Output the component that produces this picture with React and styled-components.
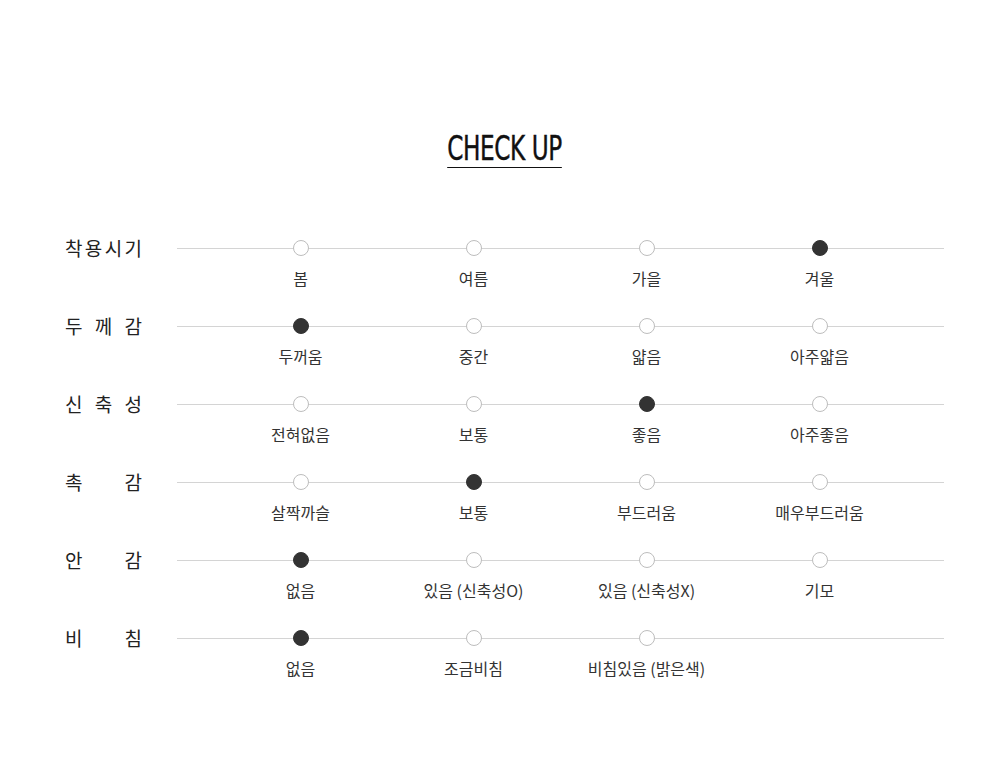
import React from "react";
import styled, { createGlobalStyle } from "styled-components";

const GlobalStyle = createGlobalStyle`
  html, body { margin: 0; padding: 0; background: #fff; }
  body { font-family: "Noto Sans CJK KR", "Noto Sans", sans-serif; color: #222; }
`;

const Page = styled.div`
  width: 1000px;
  height: 776px;
  box-sizing: border-box;
  padding: 131px 0 0 65px;
`;

const TitleWrap = styled.div`
  display: flex;
  justify-content: center;
  width: 879px;
  margin-bottom: 80px;
`;

const Title = styled.h2`
  margin: 0;
  font-family: "DejaVu Sans Condensed", "DejaVu Sans", sans-serif;
  font-stretch: condensed;
  font-weight: 400;
  font-size: 33px;
  line-height: 36px;
  color: #111;
  letter-spacing: -0.5px;
  border-bottom: 1px solid #111;
  padding-bottom: 0px;
  transform: scaleX(0.78);
  -webkit-text-stroke: 0.4px #111;
`;

const Rows = styled.div`
  display: flex;
  flex-direction: column;
  gap: 37px;
`;

const Row = styled.div`
  display: flex;
  align-items: flex-start;
`;

const RowLabel = styled.div`
  width: 77px;
  margin-right: 35px;
  display: flex;
  justify-content: space-between;
  font-size: 19px;
  line-height: 24px;
  color: #222;
  margin-top: -12px;
`;

const Track = styled.div`
  position: relative;
  width: 767px;
  padding-left: 37px;
  box-sizing: border-box;
  display: grid;
  grid-template-columns: repeat(4, 173px);
  &::before {
    content: "";
    position: absolute;
    left: 0;
    right: 0;
    top: 0;
    height: 1px;
    background: #d4d4d4;
  }
`;

const Option = styled.div`
  display: flex;
  flex-direction: column;
  align-items: center;
  position: relative;
  margin-top: -8px;
`;

const Dot = styled.span`
  box-sizing: border-box;
  width: 16px;
  height: 16px;
  border-radius: 50%;
  background: ${(p) => (p.$on ? "#333" : "#fff")};
  border: 1px solid ${(p) => (p.$on ? "#333" : "#bdbdbd")};
`;

const OptionText = styled.span`
  margin-top: 12px;
  font-size: 16px;
  line-height: 21px;
  color: #333;
  white-space: nowrap;
`;

const data = [
  { label: "착용시기", opts: ["봄", "여름", "가을", "겨울"], on: 3 },
  { label: "두께감", opts: ["두꺼움", "중간", "얇음", "아주얇음"], on: 0 },
  { label: "신축성", opts: ["전혀없음", "보통", "좋음", "아주좋음"], on: 2 },
  { label: "촉감", opts: ["살짝까슬", "보통", "부드러움", "매우부드러움"], on: 1 },
  { label: "안감", opts: ["없음", "있음 (신축성O)", "있음 (신축성X)", "기모"], on: 0 },
  { label: "비침", opts: ["없음", "조금비침", "비침있음 (밝은색)"], on: 0 },
];

export default function App() {
  return (
    <>
      <GlobalStyle />
      <Page>
        <TitleWrap>
          <Title>CHECK UP</Title>
        </TitleWrap>
        <Rows>
          {data.map((r) => (
            <Row key={r.label}>
              <RowLabel>
                {r.label.split("").map((c, i) => (
                  <span key={i}>{c}</span>
                ))}
              </RowLabel>
              <Track>
                {r.opts.map((o, i) => (
                  <Option key={o + i}>
                    <Dot $on={i === r.on} />
                    <OptionText>{o}</OptionText>
                  </Option>
                ))}
              </Track>
            </Row>
          ))}
        </Rows>
      </Page>
    </>
  );
}
